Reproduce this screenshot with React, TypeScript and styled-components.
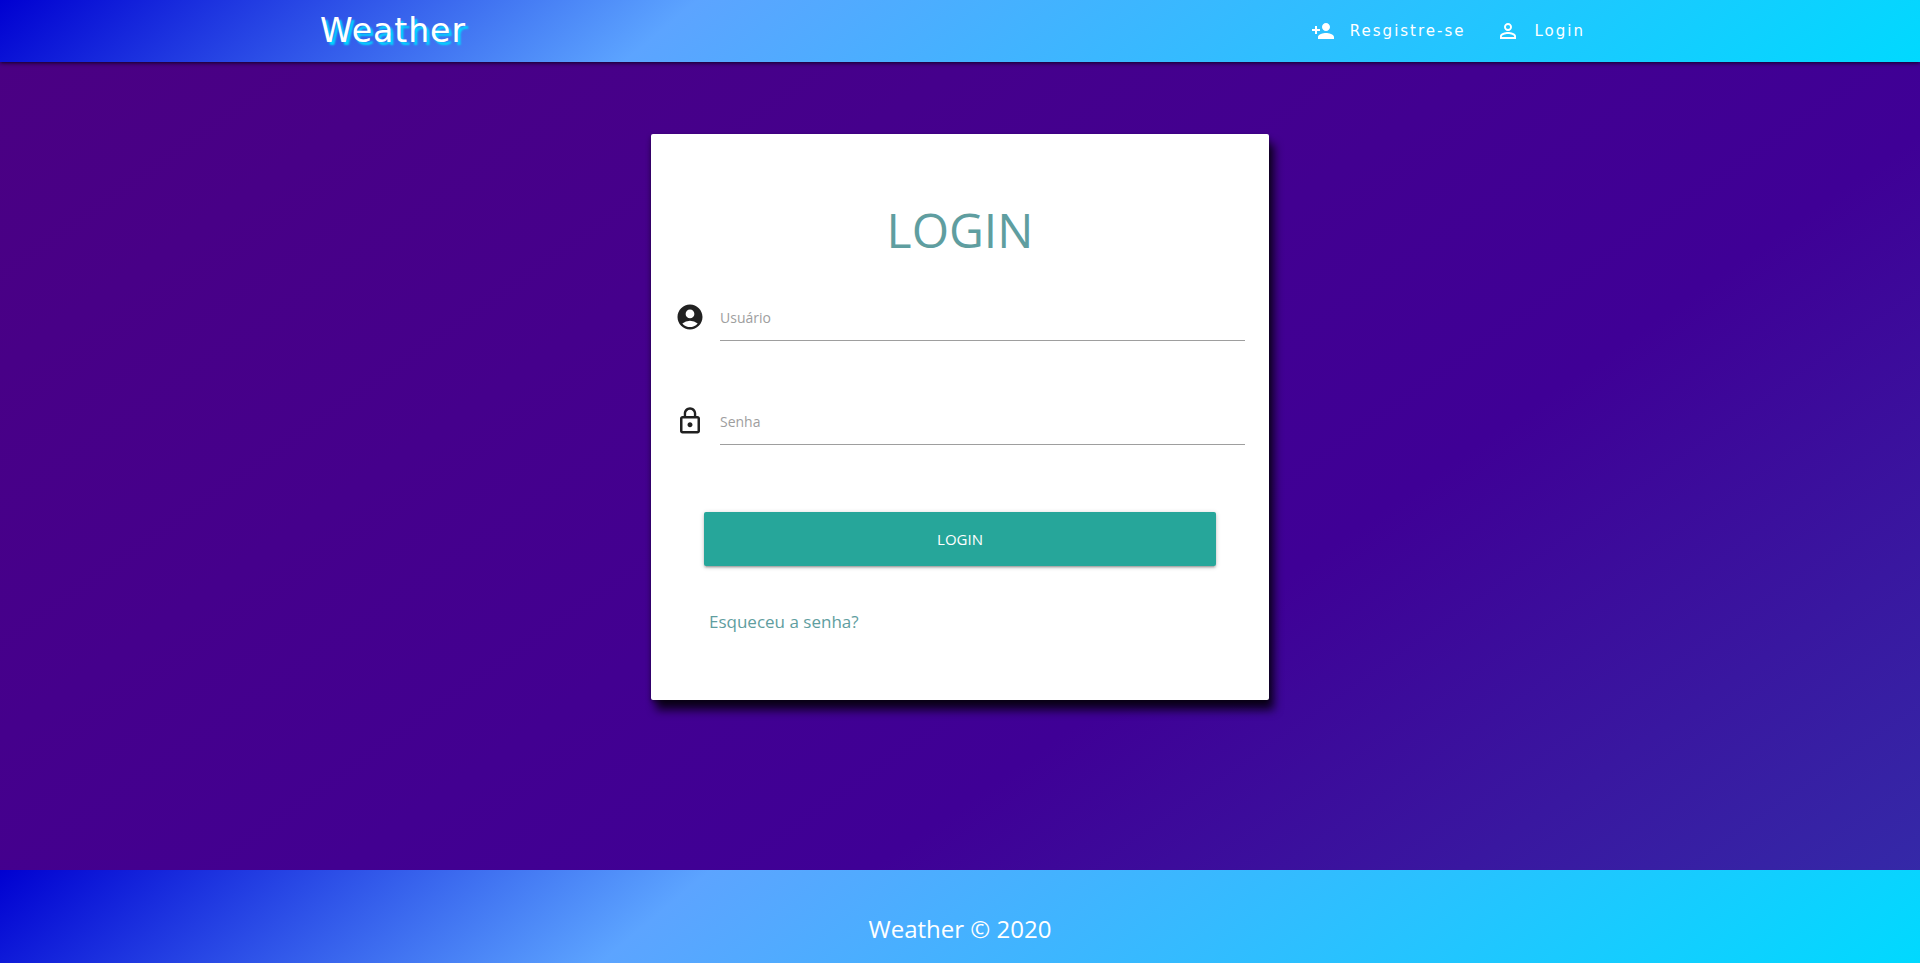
import React from "react";
import styled, { createGlobalStyle } from "styled-components";
import { MdPersonAdd, MdPersonOutline, MdAccountCircle, MdLockOutline } from "react-icons/md";

const brandGradient = "linear-gradient(140deg, #0000d1 0%, #5ca4ff 35%, #00d9ff 100%)";

const GlobalStyle = createGlobalStyle`
  *, *::before, *::after { box-sizing: border-box; }
  body {
    margin: 0;
    font-family: "Open Sans", "Noto Sans", sans-serif;
    color: #212121;
  }
`;

const Page = styled.div`
  min-height: 100vh;
  display: flex;
  flex-direction: column;
  background: linear-gradient(145deg, #4b0082 0%, #3f0096 64%, #332eaa 100%);
`;

const Container = styled.div`
  width: 70%;
  max-width: 1280px;
  margin: 0 auto;
`;

const Header = styled.header`
  background: ${brandGradient};
  box-shadow: 0 2px 2px rgba(0, 0, 0, 0.14), 0 3px 1px -2px rgba(0, 0, 0, 0.12), 0 1px 5px rgba(0, 0, 0, 0.5);
  font-family: "DejaVu Sans", sans-serif;
`;

const Bar = styled(Container)`
  height: 62px;
  display: flex;
  align-items: center;
  justify-content: space-between;
`;

const Brand = styled.a`
  color: #fff;
  font-size: 33px;
  line-height: 40px;
  letter-spacing: 1px;
  text-decoration: none;
  text-shadow: 3px 3px 2px #00d9ff;
`;

const Nav = styled.nav`
  display: flex;
`;

const NavLink = styled.a`
  display: flex;
  align-items: center;
  gap: 15px;
  padding: 0 15px;
  color: #fff;
  font-size: 15px;
  letter-spacing: 2px;
  text-decoration: none;
`;

const Main = styled.main`
  flex: 1;
  padding: 72px 0;
`;

const Card = styled.form`
  width: 618px;
  max-width: 100%;
  margin: 0 auto;
  padding: 64px 24px;
  background: #fff;
  border-radius: 2px;
  box-shadow: 0 2px 5px rgba(0, 0, 0, 0.4), 5px 10px 10px rgba(0, 0, 0, 0.8);
`;

const Title = styled.h1`
  margin: 0 0 34px;
  color: #5f9ea0;
  font-size: 48px;
  line-height: 64px;
  font-weight: 400;
  text-align: center;
`;

const Field = styled.div`
  display: flex;
  align-items: center;
  gap: 15px;
  height: 42px;
  margin-bottom: 62px;
`;

const Input = styled.input`
  flex: 1;
  min-width: 0;
  height: 44px;
  margin-top: 4px;
  padding: 0 0 2px;
  border: 0;
  border-bottom: 1px solid #9e9e9e;
  outline: 0;
  background: transparent;
  font-family: inherit;
  font-size: 14px;
  color: #212121;
  &::placeholder { color: #9e9e9e; opacity: 1; }
`;

const Submit = styled.button`
  display: block;
  width: 512px;
  max-width: 100%;
  height: 54px;
  margin: 70px auto 0;
  border: 0;
  border-radius: 2px;
  background: #26a69a;
  box-shadow: 0 2px 2px rgba(0, 0, 0, 0.14), 0 3px 1px -2px rgba(0, 0, 0, 0.12), 0 1px 5px rgba(0, 0, 0, 0.2);
  color: #fff;
  font-family: inherit;
  font-size: 15px;
`;

const Forgot = styled.a`
  display: inline-block;
  margin: 42px 0 0 34px;
  color: #5f9ea0;
  font-size: 17px;
  line-height: 28px;
  text-decoration: none;
`;

const Footer = styled.footer`
  height: 93px;
  padding-top: 40px;
  background: ${brandGradient};
  color: #fff;
  font-size: 24px;
  line-height: 38px;
  text-align: center;
`;

export default function App() {
  return (
    <Page>
      <GlobalStyle />
      <Header>
        <Bar>
          <Brand href="#">Weather</Brand>
          <Nav>
            <NavLink href="#"><MdPersonAdd size={24} aria-hidden />Resgistre-se</NavLink>
            <NavLink href="#"><MdPersonOutline size={24} aria-hidden />Login</NavLink>
          </Nav>
        </Bar>
      </Header>
      <Main>
        <Container>
          <Card>
            <Title>LOGIN</Title>
            <Field>
              <MdAccountCircle size={30} aria-hidden />
              <Input type="text" placeholder="Usuário" aria-label="Usuário" />
            </Field>
            <Field>
              <MdLockOutline size={30} aria-hidden />
              <Input type="password" placeholder="Senha" aria-label="Senha" />
            </Field>
            <Submit type="submit">LOGIN</Submit>
            <Forgot href="#">Esqueceu a senha?</Forgot>
          </Card>
        </Container>
      </Main>
      <Footer>Weather © 2020</Footer>
    </Page>
  );
}
